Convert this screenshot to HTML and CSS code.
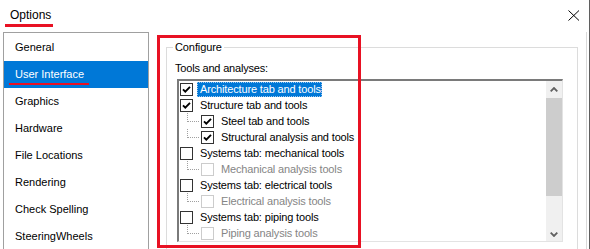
FILE: index.html
```html
<!DOCTYPE html>
<html lang="en">
<head>
  <meta charset="UTF-8">
  <title>Options</title>
  <link rel="stylesheet" href="styles.css">
</head>
<body>
  <div class="window">
    <!-- Title bar -->
    <header class="titlebar">
      <span class="title">Options</span>
      <span class="close">
        <svg width="12" height="11" viewBox="0 0 12 11">
          <path d="M0.5 0.5 L11 10.5 M11 0.5 L0.5 10.5" stroke="#000" stroke-width="1" fill="none" />
        </svg>
      </span>
    </header>

    <div class="main">
      <!-- Left navigation -->
      <ul class="nav">
        <li>General</li>
        <li class="active">User Interface</li>
        <li>Graphics</li>
        <li>Hardware</li>
        <li>File Locations</li>
        <li>Rendering</li>
        <li>Check Spelling</li>
        <li>SteeringWheels</li>
      </ul>

      <!-- Settings pane -->
      <div class="pane">
        <fieldset class="group">
          <legend>Configure</legend>
          <div class="label">Tools and analyses:</div>
          <div class="tree">
            <div class="tree-items">
              <div class="node">
                <span class="check"><svg width="11" height="11" viewBox="0 0 11 11"><path d="M2 5.3 L4.3 7.6 L9 2.8" stroke="#000" stroke-width="1.9" fill="none" /></svg></span>
                <span class="text selected">Architecture tab and tools</span>
              </div>
              <div class="node">
                <span class="check"><svg width="11" height="11" viewBox="0 0 11 11"><path d="M2 5.3 L4.3 7.6 L9 2.8" stroke="#000" stroke-width="1.9" fill="none" /></svg></span>
                <span class="text">Structure tab and tools</span>
              </div>
              <div class="node child">
                <span class="branch"></span>
                <span class="check"><svg width="11" height="11" viewBox="0 0 11 11"><path d="M2 5.3 L4.3 7.6 L9 2.8" stroke="#000" stroke-width="1.9" fill="none" /></svg></span>
                <span class="text">Steel tab and tools</span>
              </div>
              <div class="node child">
                <span class="branch"></span>
                <span class="check"><svg width="11" height="11" viewBox="0 0 11 11"><path d="M2 5.3 L4.3 7.6 L9 2.8" stroke="#000" stroke-width="1.9" fill="none" /></svg></span>
                <span class="text">Structural analysis and tools</span>
              </div>
              <div class="node">
                <span class="check"></span>
                <span class="text">Systems tab: mechanical tools</span>
              </div>
              <div class="node child">
                <span class="branch"></span>
                <span class="check disabled"></span>
                <span class="text disabled">Mechanical analysis tools</span>
              </div>
              <div class="node">
                <span class="check"></span>
                <span class="text">Systems tab: electrical tools</span>
              </div>
              <div class="node child">
                <span class="branch"></span>
                <span class="check disabled"></span>
                <span class="text disabled">Electrical analysis tools</span>
              </div>
              <div class="node">
                <span class="check"></span>
                <span class="text">Systems tab: piping tools</span>
              </div>
              <div class="node child">
                <span class="branch"></span>
                <span class="check disabled"></span>
                <span class="text disabled">Piping analysis tools</span>
              </div>
            </div>

            <!-- Scrollbar -->
            <div class="scrollbar">
              <div class="sb-btn">
                <svg width="8" height="5" viewBox="0 0 8 5"><polyline points="0.7,4.3 4,1 7.3,4.3" stroke="#606060" stroke-width="1.8" fill="none" /></svg>
              </div>
              <div class="sb-thumb"></div>
              <div class="sb-track"></div>
              <div class="sb-btn down">
                <svg width="8" height="5" viewBox="0 0 8 5"><polyline points="0.7,0.7 4,4 7.3,0.7" stroke="#606060" stroke-width="1.8" fill="none" /></svg>
              </div>
            </div>
          </div>
        </fieldset>
      </div>
    </div>

    <!-- Red annotation frame -->
    <div class="callout"></div>
  </div>
</body>
</html>
```

FILE: styles.css
```css
/* Reset */
* {
  margin: 0;
  padding: 0;
  box-sizing: border-box;
}

html, body {
  width: 100%;
  height: 100%;
  overflow: hidden;
}

body {
  font-family: "Liberation Sans", Arial, sans-serif;
  font-size: 11px;
  color: #000;
  background-color: #fff;
}

.window {
  position: relative;
  height: 249px;
  display: flex;
  flex-direction: column;
  border-right: 1px solid #5f5f5f;
}

/* Title bar */
.titlebar {
  height: 32px;
  display: flex;
  justify-content: space-between;
  align-items: flex-start;
  padding: 8px 9px 0 10px;
  flex: none;
}

.title {
  position: relative;
  font-size: 12px;
  line-height: 15px;
}

.title::after {
  content: "";
  position: absolute;
  left: -5px;
  top: 16px;
  width: 48px;
  height: 3px;
  background-color: #e81123;
}

.close {
  display: flex;
  margin-top: 2px;
}

/* Body */
.main {
  flex: 1;
  display: flex;
  min-height: 0;
}

/* Navigation list */
.nav {
  list-style: none;
  width: 146px;
  margin-left: 3px;
  border: 1px solid #a0a0a0;
  border-bottom: none;
  padding-top: 1px;
  flex: none;
}

.nav li {
  height: 27px;
  line-height: 27px;
  padding-left: 11px;
  white-space: nowrap;
}

.nav li.active {
  position: relative;
  background-color: #0078d7;
  color: #fff;
}

.nav li.active::after {
  content: "";
  position: absolute;
  left: 5px;
  top: 22px;
  width: 80px;
  height: 2px;
  background-color: #e81123;
}

/* Settings pane */
.pane {
  flex: 1;
  margin-right: 2px;
  border-right: 1px solid #dadada;
  padding: 8px 8px 0 17px;
}

.group {
  border: 1px solid #dcdcdc;
  border-bottom: none;
  padding: 0 14px 0 8px;
  height: 220px;
}

.group legend {
  padding: 0 2px;
  margin-left: -2px;
  line-height: 14px;
  letter-spacing: -0.1px;
}

.label {
  margin-top: 7px;
  line-height: 14px;
  letter-spacing: -0.2px;
}

/* Tree view */
.tree {
  margin-top: 4px;
  margin-left: 2px;
  height: 163px;
  display: flex;
  border-style: solid;
  border-width: 2px 1px 1px 2px;
  border-color: #7a7a7a #e3e3e3 #e3e3e3 #7a7a7a;
}

.tree-items {
  flex: 1;
  padding-left: 1px;
}

.node {
  height: 16px;
  display: flex;
  align-items: center;
  white-space: nowrap;
  letter-spacing: -0.15px;
}

.node.child {
  padding-left: 7px;
}

.branch {
  align-self: flex-start;
  width: 12px;
  height: 9px;
  margin-right: 2px;
  border-left: 1px dotted #a0a0a0;
  border-bottom: 1px dotted #a0a0a0;
}

.check {
  width: 13px;
  height: 13px;
  flex: none;
  display: flex;
  align-items: center;
  justify-content: center;
  border: 1px solid #333;
  background-color: #fff;
}

.check.disabled {
  border-color: #cccccc;
}

.text {
  margin-left: 7px;
  line-height: 13px;
}

.text.selected {
  margin-left: 4px;
  padding: 0 0 0 2px;
  background-color: #0078d7;
  color: #fff;
  border: 1px dotted #9fc8ee;
}

.text.disabled {
  color: #858585;
}

/* Scrollbar */
.scrollbar {
  width: 16px;
  flex: none;
  display: flex;
  flex-direction: column;
  background-color: #f0f0f0;
}

.sb-btn {
  height: 17px;
  display: flex;
  align-items: center;
  justify-content: center;
  flex: none;
}

.sb-btn.down {
  align-items: flex-end;
  padding-bottom: 4px;
}

.sb-thumb {
  height: 98px;
  background-color: #cdcdcd;
  flex: none;
}

.sb-track {
  flex: 1;
}

/* Red annotation frame */
.callout {
  position: absolute;
  left: 157px;
  top: 35px;
  width: 204px;
  height: 213px;
  border: 3px solid #e81123;
  pointer-events: none;
}
```
